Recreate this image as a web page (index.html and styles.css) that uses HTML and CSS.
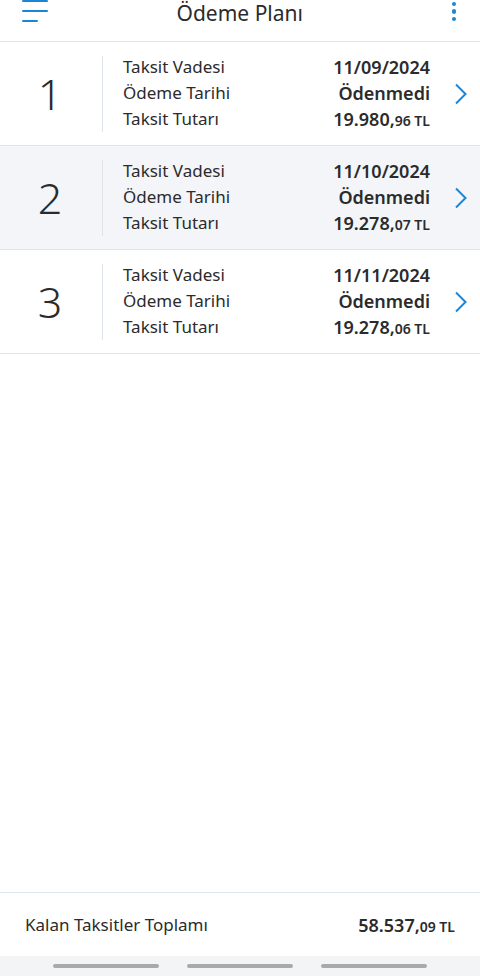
FILE: index.html
```html
<!doctype html>
<html lang="tr">
<head>
<meta charset="utf-8">
<title>Ödeme Planı</title>
<meta name="viewport" content="width=device-width, initial-scale=1">
<link rel="stylesheet" href="styles.css">
</head>
<body>
    <div class="app">
        <header class="topbar">
            <span class="menu-btn"><i></i><i></i><i class="short"></i></span>
            <h1>Ödeme Planı</h1>
            <span class="more-btn"><i></i><i></i><i></i></span>
        </header>

        <ul class="plan">
            <li class="plan-row">
                <div class="plan-no">1</div>
                <dl class="plan-info">
                    <dt>Taksit Vadesi</dt><dd>11/09/2024</dd>
                    <dt>Ödeme Tarihi</dt><dd>Ödenmedi</dd>
                    <dt>Taksit Tutarı</dt><dd>19.980,<small>96 TL</small></dd>
                </dl>
                <svg class="chevron" width="14" height="22" viewBox="0 0 14 22"><path d="M2 1.5 L11.5 11 L2 20.5" fill="none" stroke="#1a86d6" stroke-width="2"/></svg>
            </li>
            <li class="plan-row active">
                <div class="plan-no">2</div>
                <dl class="plan-info">
                    <dt>Taksit Vadesi</dt><dd>11/10/2024</dd>
                    <dt>Ödeme Tarihi</dt><dd>Ödenmedi</dd>
                    <dt>Taksit Tutarı</dt><dd>19.278,<small>07 TL</small></dd>
                </dl>
                <svg class="chevron" width="14" height="22" viewBox="0 0 14 22"><path d="M2 1.5 L11.5 11 L2 20.5" fill="none" stroke="#1a86d6" stroke-width="2"/></svg>
            </li>
            <li class="plan-row">
                <div class="plan-no">3</div>
                <dl class="plan-info">
                    <dt>Taksit Vadesi</dt><dd>11/11/2024</dd>
                    <dt>Ödeme Tarihi</dt><dd>Ödenmedi</dd>
                    <dt>Taksit Tutarı</dt><dd>19.278,<small>06 TL</small></dd>
                </dl>
                <svg class="chevron" width="14" height="22" viewBox="0 0 14 22"><path d="M2 1.5 L11.5 11 L2 20.5" fill="none" stroke="#1a86d6" stroke-width="2"/></svg>
            </li>
        </ul>

        <footer class="total">
            <span>Kalan Taksitler Toplamı</span>
            <strong>58.537,<small>09 TL</small></strong>
        </footer>

        <div class="navbar"><i></i><i></i><i></i></div>
    </div>
</body>
</html>
```

FILE: styles.css
```css
*{
    margin: 0;
    padding: 0;
    box-sizing: border-box;
}
html, body{height: 100%;}
body{
    font-family: "Noto Sans", "Open Sans", sans-serif;
    color: #2b2b2b;
    background: #fff;
}
.app{
    height: 100%;
    display: flex;
    flex-direction: column;
}
.topbar{
    height: 42px;
    border-bottom: 1px solid #dfe4ec;
    display: flex;
    align-items: center;
    justify-content: space-between;
    padding: 0 24px 0 22px;
}
.topbar h1{
    font-size: 21px;
    font-weight: 400;
    line-height: 1;
    margin: -15px 20px 0 0;
}
.menu-btn{
    width: 26px;
    align-self: flex-start;
    display: flex;
    flex-direction: column;
    gap: 8px;
}
.menu-btn i{
    display: block;
    height: 2px;
    background: #1a86d6;
    border-radius: 1px;
}
.menu-btn i.short{width: 16px;}
.more-btn{
    align-self: flex-start;
    display: flex;
    flex-direction: column;
    gap: 3px;
    padding-top: 1.5px;
}
.more-btn i{
    display: block;
    width: 4.5px;
    height: 4.5px;
    border-radius: 50%;
    background: #1a86d6;
}
.plan{
    list-style: none;
    flex: 1;
}
.plan-row{
    height: 104px;
    border-bottom: 1px solid #dfe4ec;
    display: flex;
    align-items: center;
    padding: 0 12px 0 0;
}
.plan-row.active{background: #f3f5f9;}
.plan-no{
    width: 103px;
    height: 76px;
    border-right: 1px solid #dfe4ec;
    display: flex;
    align-items: center;
    justify-content: center;
    font-size: 43px;
    font-weight: 300;
    padding-right: 2px;
}
.plan-info{
    flex: 1;
    display: grid;
    grid-template-columns: 1fr auto;
    padding: 0 24px 0 20px;
    line-height: 26px;
    font-size: 17px;
}
.plan-info dt{font-weight: 400;}
.plan-info dd{
    text-align: right;
    font-weight: 600;
    font-size: 18px;
}
small{font-size: 14px;}
.chevron{display: block;}
.total{
    height: 64px;
    border-top: 1px solid #dfe4ec;
    display: flex;
    align-items: center;
    justify-content: space-between;
    padding: 0 25px;
    font-size: 17px;
}
.total strong{font-weight: 600; font-size: 18px;}
.navbar{
    height: 20px;
    background: #f3f4f6;
    display: flex;
    justify-content: center;
    align-items: center;
    gap: 28px;
}
.navbar i{
    display: block;
    width: 106px;
    height: 4px;
    border-radius: 2px;
    background: #a9a9a9;
}
```
